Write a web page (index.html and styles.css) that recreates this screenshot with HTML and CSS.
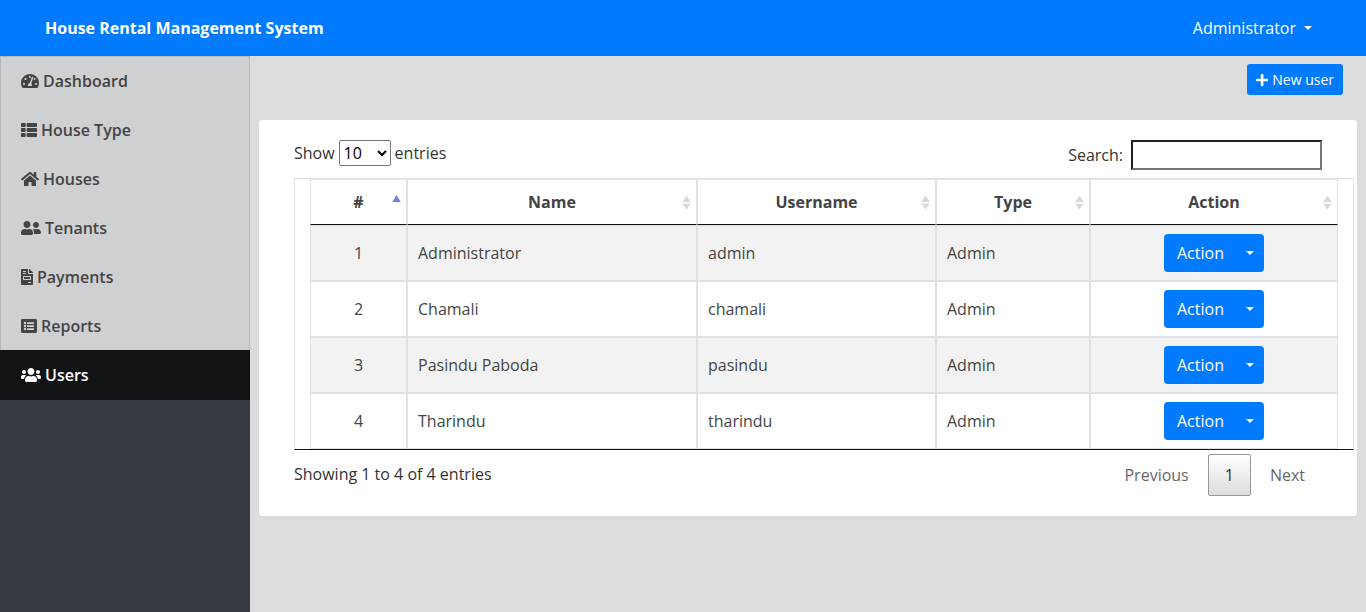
FILE: index.html
```html
<!DOCTYPE html>
<html lang="en">
<head>
<meta charset="utf-8">
<title>House Rental Management System</title>
<link rel="stylesheet" href="styles.css">
</head>
<body>
<svg class="defs" width="0" height="0" aria-hidden="true">
  <symbol id="sort" viewBox="0 0 9 15"><path d="M0.2 7L4.5 0.6L8.8 7zM0.2 8.5h8.6L4.5 14.8z"/></symbol>
</svg>
<header class="topbar">
  <div class="brand">House Rental Management System</div>
  <a class="account">Administrator<span class="caret"></span></a>
</header>
<div class="layout">
  <nav class="sidebar">
    <a class="nav-item"><svg class="icon" viewBox="0 0 576 512" width="18" height="16"><path d="M288 32C128.94 32 0 160.94 0 320c0 52.8 14.25 102.26 39.06 144.8 5.61 9.62 16.3 15.2 27.44 15.2h443c11.14 0 21.83-5.58 27.44-15.2C561.75 422.26 576 372.8 576 320c0-159.06-128.94-288-288-288zm0 64c14.71 0 26.58 10.13 30.32 23.65-1.11 2.26-2.64 4.23-3.45 6.67l-9.22 27.67c-5.13 3.49-10.97 6.01-17.64 6.01-17.67 0-32-14.33-32-32S270.33 96 288 96zM96 384c-17.67 0-32-14.33-32-32s14.33-32 32-32 32 14.33 32 32-14.33 32-32 32zm48-160c-17.67 0-32-14.33-32-32s14.33-32 32-32 32 14.33 32 32-14.33 32-32 32zm246.77-72.41l-61.33 184C343.13 347.33 352 364.54 352 384c0 11.72-3.38 22.55-8.88 32H232.88c-5.5-9.45-8.88-20.28-8.88-32 0-33.94 26.5-61.43 59.9-63.59l61.34-184.01c4.17-12.56 17.73-19.45 30.36-15.17 12.57 4.19 19.35 17.79 15.17 30.36zm14.66 57.2l15.52-46.55c3.47-1.29 7.13-2.23 11.05-2.23 17.67 0 32 14.33 32 32s-14.33 32-32 32c-11.38-.01-20.89-6.28-26.57-15.22zM480 384c-17.67 0-32-14.33-32-32s14.33-32 32-32 32 14.33 32 32-14.33 32-32 32z"/></svg>Dashboard</a>
    <a class="nav-item"><svg class="icon" viewBox="0 0 512 512" width="16" height="16"><path d="M149.333 216v80c0 13.255-10.745 24-24 24H24c-13.255 0-24-10.745-24-24v-80c0-13.255 10.745-24 24-24h101.333c13.255 0 24 10.745 24 24zM0 376v80c0 13.255 10.745 24 24 24h101.333c13.255 0 24-10.745 24-24v-80c0-13.255-10.745-24-24-24H24c-13.255 0-24 10.745-24 24zM125.333 32H24C10.745 32 0 42.745 0 56v80c0 13.255 10.745 24 24 24h101.333c13.255 0 24-10.745 24-24V56c0-13.255-10.745-24-24-24zm80 448H488c13.255 0 24-10.745 24-24v-80c0-13.255-10.745-24-24-24H205.333c-13.255 0-24 10.745-24 24v80c0 13.255 10.745 24 24 24zm-24-424v80c0 13.255 10.745 24 24 24H488c13.255 0 24-10.745 24-24V56c0-13.255-10.745-24-24-24H205.333c-13.255 0-24 10.745-24 24zm24 264H488c13.255 0 24-10.745 24-24v-80c0-13.255-10.745-24-24-24H205.333c-13.255 0-24 10.745-24 24v80c0 13.255 10.745 24 24 24z"/></svg>House Type</a>
    <a class="nav-item"><svg class="icon" viewBox="0 0 576 512" width="18" height="16"><path d="M280.37 148.26L96 300.11V464a16 16 0 0 0 16 16l112.06-.29a16 16 0 0 0 15.92-16V368a16 16 0 0 1 16-16h64a16 16 0 0 1 16 16v95.64a16 16 0 0 0 16 16.05L464 480a16 16 0 0 0 16-16V300L295.67 148.26a12.19 12.19 0 0 0-15.3 0zM571.6 251.47L488 182.56V44.05a12 12 0 0 0-12-12h-56a12 12 0 0 0-12 12v72.61L318.47 43a48 48 0 0 0-61 0L4.34 251.47a12 12 0 0 0-1.6 16.9l25.5 31A12 12 0 0 0 45.15 301l235.22-193.74a12.19 12.19 0 0 1 15.3 0L530.9 301a12 12 0 0 0 16.9-1.6l25.5-31a12 12 0 0 0-1.7-16.93z"/></svg>Houses</a>
    <a class="nav-item"><svg class="icon" viewBox="0 0 640 512" width="20" height="16"><path d="M192 256c61.9 0 112-50.1 112-112S253.9 32 192 32 80 82.1 80 144s50.1 112 112 112zm76.8 32h-8.3c-20.8 10-43.9 16-68.5 16s-47.6-6-68.5-16h-8.3C51.6 288 0 339.6 0 403.2V432c0 26.5 21.5 48 48 48h288c26.5 0 48-21.5 48-48v-28.8c0-63.6-51.6-115.2-115.2-115.2zM480 256c53 0 96-43 96-96s-43-96-96-96-96 43-96 96 43 96 96 96zm48 32h-3.8c-13.9 4.8-28.6 8-44.2 8s-30.3-3.2-44.2-8H432c-20.4 0-39.2 5.9-55.7 15.4 24.4 26.3 39.7 61.2 39.7 99.8v38.4c0 2.2-.5 4.3-.6 6.4H592c26.5 0 48-21.5 48-48 0-61.9-50.1-112-112-112z"/></svg>Tenants</a>
    <a class="nav-item"><svg class="icon" viewBox="0 0 384 512" width="12" height="16"><path d="M288 256H96v64h192v-64zm89-151L279.1 7c-4.5-4.5-10.6-7-17-7H256v128h128v-6.1c0-6.3-2.5-12.4-7-16.9zm-153 31V0H24C10.7 0 0 10.7 0 24v464c0 13.3 10.7 24 24 24h336c13.3 0 24-10.7 24-24V160H248c-13.2 0-24-10.8-24-24zM64 72c0-4.42 3.58-8 8-8h80c4.42 0 8 3.58 8 8v16c0 4.42-3.58 8-8 8H72c-4.42 0-8-3.58-8-8V72zm0 64c0-4.42 3.58-8 8-8h80c4.42 0 8 3.58 8 8v16c0 4.42-3.58 8-8 8H72c-4.42 0-8-3.58-8-8v-16zm256 304c0 4.42-3.58 8-8 8h-80c-4.42 0-8-3.58-8-8v-16c0-4.42 3.58-8 8-8h80c4.42 0 8 3.58 8 8v16zm0-200v96c0 8.84-7.16 16-16 16H80c-8.84 0-16-7.16-16-16v-96c0-8.84 7.16-16 16-16h224c8.84 0 16 7.16 16 16z"/></svg>Payments</a>
    <a class="nav-item"><svg class="icon" viewBox="0 0 512 512" width="16" height="16"><path fill-rule="evenodd" d="M464 480H48c-26.51 0-48-21.49-48-48V80c0-26.51 21.49-48 48-48h416c26.51 0 48 21.49 48 48v352c0 26.51-21.49 48-48 48zM128 120a40 40 0 1 0 0 80a40 40 0 0 0 0-80zm0 96a40 40 0 1 0 0 80a40 40 0 0 0 0-80zm0 96a40 40 0 1 0 0 80a40 40 0 0 0 0-80zM416 176v-32c0-6.627-5.373-12-12-12H204c-6.627 0-12 5.373-12 12v32c0 6.627 5.373 12 12 12h200c6.627 0 12-5.373 12-12zm0 96v-32c0-6.627-5.373-12-12-12H204c-6.627 0-12 5.373-12 12v32c0 6.627 5.373 12 12 12h200c6.627 0 12-5.373 12-12zm0 96v-32c0-6.627-5.373-12-12-12H204c-6.627 0-12 5.373-12 12v32c0 6.627 5.373 12 12 12h200c6.627 0 12-5.373 12-12z"/></svg>Reports</a>
    <a class="nav-item active"><svg class="icon" viewBox="0 0 640 512" width="20" height="16"><path d="M96 224c35.3 0 64-28.7 64-64s-28.7-64-64-64-64 28.7-64 64 28.7 64 64 64zm448 0c35.3 0 64-28.7 64-64s-28.7-64-64-64-64 28.7-64 64 28.7 64 64 64zm32 32h-64c-17.6 0-33.5 7.1-45.1 18.6 40.3 22.1 68.9 62 75.1 109.4h66c17.7 0 32-14.3 32-32v-32c0-35.3-28.7-64-64-64zm-256 0c61.9 0 112-50.1 112-112S381.9 32 320 32 208 82.1 208 144s50.1 112 112 112zm76.8 32h-8.3c-20.8 10-43.9 16-68.5 16s-47.6-6-68.5-16h-8.3C179.6 288 128 339.6 128 403.2V432c0 26.5 21.5 48 48 48h288c26.5 0 48-21.5 48-48v-28.8c0-63.6-51.6-115.2-115.2-115.2zm-223.7-13.4C161.5 263.1 145.6 256 128 256H64c-35.3 0-64 28.7-64 64v32c0 17.7 14.3 32 32 32h65.9c6.3-47.4 34.9-87.3 75.2-109.4z"/></svg>Users</a>
  </nav>
  <main class="content">
    <div class="toolbar">
      <button class="btn btn-sm"><svg class="icon" viewBox="0 0 448 512" width="12.25" height="14"><path d="M416 208H272V64c0-17.67-14.33-32-32-32h-32c-17.67 0-32 14.33-32 32v144H32c-17.67 0-32 14.33-32 32v32c0 17.67 14.33 32 32 32h144v144c0 17.67 14.33 32 32 32h32c17.67 0 32-14.33 32-32V304h144c17.67 0 32-14.33 32-32v-32c0-17.67-14.33-32-32-32z"/></svg>New user</button>
    </div>
    <section class="card">
      <div class="controls">
        <label class="length">Show <select class="length-select"><option>10</option></select> entries</label>
        <label class="search">Search:<input class="search-input" type="text"></label>
      </div>
      <div class="table-frame">
        <table class="table">
          <colgroup><col class="c-num"><col class="c-name"><col class="c-user"><col class="c-type"><col class="c-action"></colgroup>
          <thead>
            <tr>
              <th>#<svg class="sort asc" width="9" height="15" viewBox="0 0 9 15"><path d="M0.2 7L4.5 0L8.8 7z"/></svg></th>
              <th>Name<svg class="sort" width="9" height="15"><use href="#sort"/></svg></th>
              <th>Username<svg class="sort" width="9" height="15"><use href="#sort"/></svg></th>
              <th>Type<svg class="sort" width="9" height="15"><use href="#sort"/></svg></th>
              <th>Action<svg class="sort" width="9" height="15"><use href="#sort"/></svg></th>
            </tr>
          </thead>
          <tbody>
            <tr><td class="center">1</td><td>Administrator</td><td>admin</td><td>Admin</td><td><div class="btn-group"><button class="btn btn-main">Action</button><button class="btn btn-split"><span class="caret"></span></button></div></td></tr>
            <tr><td class="center">2</td><td>Chamali</td><td>chamali</td><td>Admin</td><td><div class="btn-group"><button class="btn btn-main">Action</button><button class="btn btn-split"><span class="caret"></span></button></div></td></tr>
            <tr><td class="center">3</td><td>Pasindu Paboda</td><td>pasindu</td><td>Admin</td><td><div class="btn-group"><button class="btn btn-main">Action</button><button class="btn btn-split"><span class="caret"></span></button></div></td></tr>
            <tr><td class="center">4</td><td>Tharindu</td><td>tharindu</td><td>Admin</td><td><div class="btn-group"><button class="btn btn-main">Action</button><button class="btn btn-split"><span class="caret"></span></button></div></td></tr>
          </tbody>
        </table>
      </div>
      <div class="footer">
        <div class="info">Showing 1 to 4 of 4 entries</div>
        <div class="pager"><a class="page">Previous</a><a class="page current">1</a><a class="page">Next</a></div>
      </div>
    </section>
  </main>
</div>
</body>
</html>
```
FILE: styles.css
```css
* { box-sizing: border-box; }
body {
  margin: 0;
  height: 612px;
  display: flex;
  flex-direction: column;
  overflow: hidden;
  background: #dcdcdc;
  color: #444;
  font: 400 16px/24px "Open Sans", sans-serif;
}
.defs { position: absolute; }
.icon { fill: currentColor; flex: none; }

.topbar {
  height: 56px;
  flex: none;
  display: flex;
  align-items: center;
  justify-content: space-between;
  padding: 0 54px 0 45px;
  background: #007bff;
  color: #fff;
}
.brand { font-weight: 700; }
.caret {
  display: inline-block;
  margin-left: 8px;
  vertical-align: 4px;
  border-top: 4px solid;
  border-right: 4px solid transparent;
  border-left: 4px solid transparent;
}

.layout { flex: 1; display: flex; min-height: 0; }
.sidebar { width: 250px; flex: none; background: #343a40; }
.nav-item {
  display: flex;
  align-items: center;
  gap: 4px;
  height: 50px;
  padding: 0 20px;
  border: 1px solid #b6b7b9;
  border-bottom-color: #cfd0d2;
  background: #cfd0d2;
  color: #444;
  font-weight: 600;
}
.nav-item + .nav-item { margin-top: -1px; border-top-color: #cfd0d2; }
.nav-item + .nav-item.active {
  position: relative;
  background: #111315;
  border-color: #111315;
  color: #fff;
}

.content { flex: 1; padding: 8px 9px 0; }
.toolbar { display: flex; justify-content: flex-end; padding-right: 14px; margin-bottom: 25px; }
.btn {
  border: 0;
  margin: 0;
  background: #007bff;
  color: #fff;
  font: 400 16px/24px "Open Sans", sans-serif;
}
.btn-sm {
  display: flex;
  align-items: center;
  gap: 4px;
  height: 31px;
  width: 96px;
  padding: 0 9px;
  border-radius: 3px;
  font-size: 14px;
  white-space: nowrap;
}

.card { height: 396px; padding: 20px 3px 0 35px; background: #fff; border-radius: 4px; }
.controls {
  display: flex;
  justify-content: space-between;
  align-items: flex-start;
  height: 38px;
  padding-right: 32px;
  color: #333;
}
.length { display: flex; align-items: center; gap: 4px; height: 26px; }
.length-select {
  width: 52px;
  height: 26px;
  border: 1px solid #767676;
  border-radius: 2px;
  background: #fff;
  color: #000;
  font: 400 16px "Open Sans", sans-serif;
  padding: 0;
}
.search { display: flex; align-items: center; gap: 8px; }
.search-input { width: 191px; height: 30px; border: 2px inset #767676; background: #fff; }

.table-frame {
  padding: 0 15px;
  border: 1px solid #dee2e6;
  border-bottom-color: #111;
}
.table {
  width: 1028px;
  table-layout: fixed;
  border-collapse: separate;
  border-spacing: 0;
}
.c-num { width: 97px; }
.c-name { width: 290px; }
.c-user { width: 239px; }
.c-type { width: 154px; }
.c-action { width: 248px; }
th {
  position: relative;
  height: 46px;
  padding: 0;
  border: 1px solid #dee2e6;
  border-bottom-color: #111;
  font-weight: 700;
  text-align: center;
}
.sort { position: absolute; right: 5px; top: 15px; fill: #d9d9d9; }
.sort.asc { fill: #7b7fdd; }
td { height: 56px; padding: 0 10px; border: 1px solid #dee2e6; }
td.center { text-align: center; }
tbody tr:nth-child(odd) { background: #f2f2f2; }
.btn-group { display: flex; width: 100px; height: 38px; margin: 0 auto; }
.btn-main { flex: 1; padding: 0 0 0 13px; text-align: left; border-radius: 4px 0 0 4px; }
.btn-split { width: 28px; padding: 0; border-radius: 0 4px 4px 0; }
.btn-split .caret { margin: 0; }

.footer { display: flex; justify-content: space-between; align-items: flex-start; padding: 4px 32px 0 0; }
.info { padding-top: 8px; color: #333; }
.pager { display: flex; gap: 2px; }
.page { height: 42px; padding: 8px 16px; border: 1px solid transparent; border-radius: 2px; color: #666; }
.page.current {
  color: #333;
  border-color: #979797;
  background: linear-gradient(to bottom, #fff 0%, #dcdcdc 100%);
}
```
